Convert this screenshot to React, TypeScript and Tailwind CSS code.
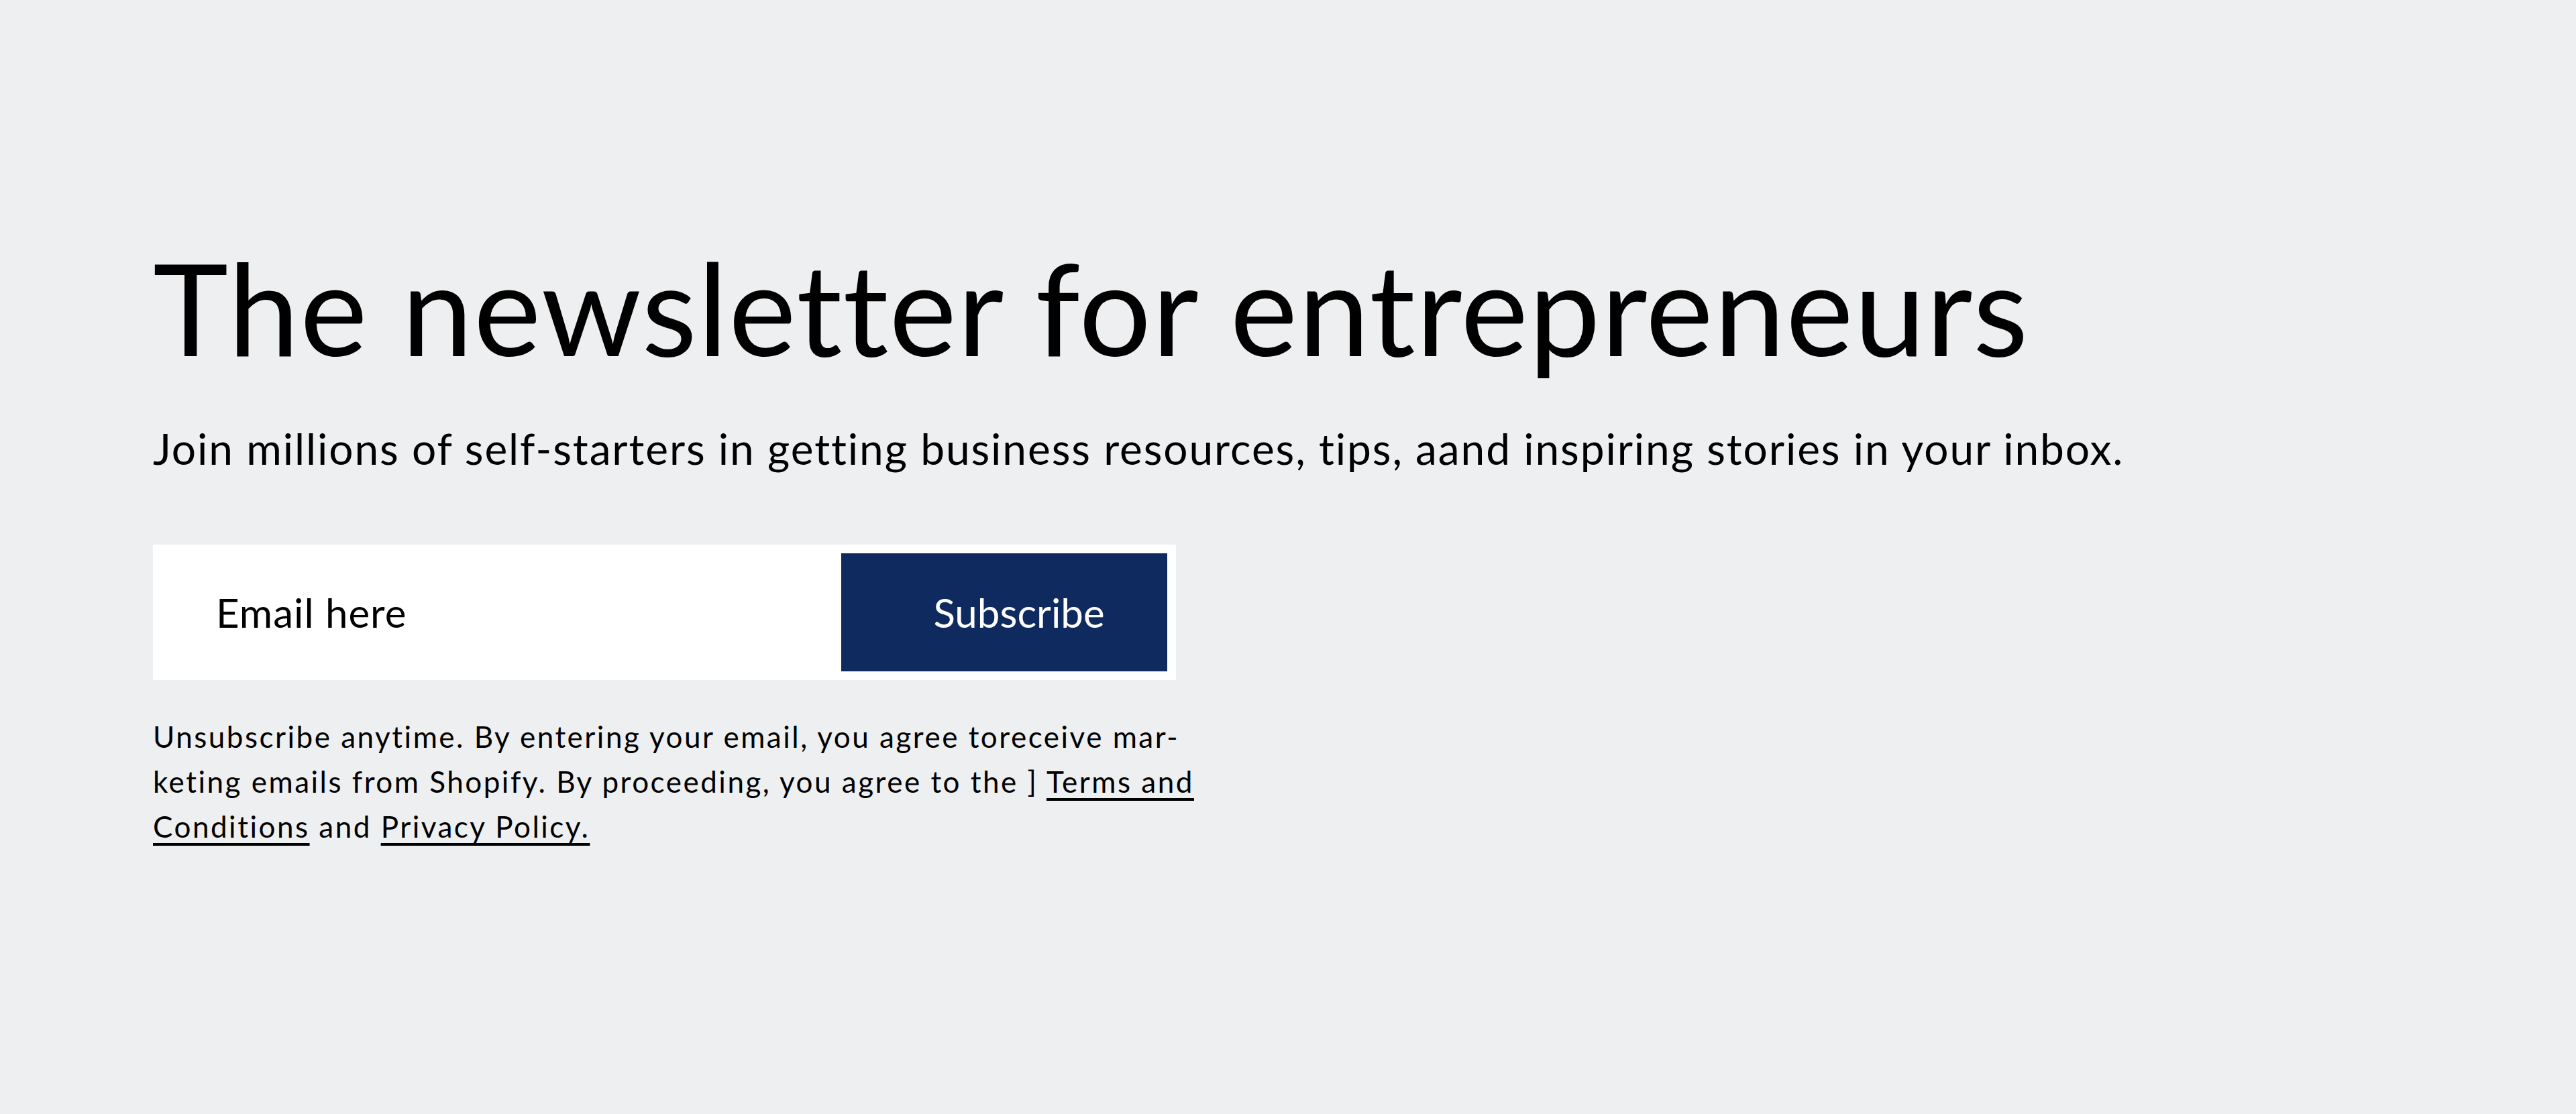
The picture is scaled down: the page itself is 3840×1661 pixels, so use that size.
import React from "react";

const App = () => {
  return (
    <div
      className="min-h-screen w-full bg-[#eeeff1] text-black [font-variant-ligatures:none]"
      style={{ fontFamily: "Lato, 'Noto Sans', sans-serif" }}
    >
      <div className="pl-[228px] pt-[362px]">
        <h1 className="text-[190px] leading-[1] font-normal tracking-[1.3px]">
          The newsletter for entrepreneurs
        </h1>
        <p className="mt-[79px] text-[64px] leading-[1.2] tracking-[1.9px]">
          Join millions of self-starters in getting business resources, tips, aand inspiring stories in your inbox.
        </p>
        <form className="mt-[104px] flex w-[1525px] h-[202px] bg-white p-[13px]">
          <input
            type="email"
            placeholder="Email here"
            className="flex-1 bg-transparent pl-[81px] text-[60px] tracking-[1px] text-black placeholder:text-black outline-none"
          />
          <button
            type="button"
            className="w-[486px] bg-[#0f2a5e] pl-[44px] text-white text-[60px]"
          >
            Subscribe
          </button>
        </form>
        <p className="mt-[51px] w-[1580px] text-[44px] leading-[67px] tracking-[2.5px]">
          Unsubscribe anytime. By entering your email, you agree toreceive mar-keting emails from Shopify. By proceeding, you agree to the ]{" "}
          <a href="#" className="underline underline-offset-[8px]">Terms and Conditions</a> and{" "}
          <a href="#" className="underline underline-offset-[8px]">Privacy Policy.</a>
        </p>
      </div>
    </div>
  );
};

export default App;
